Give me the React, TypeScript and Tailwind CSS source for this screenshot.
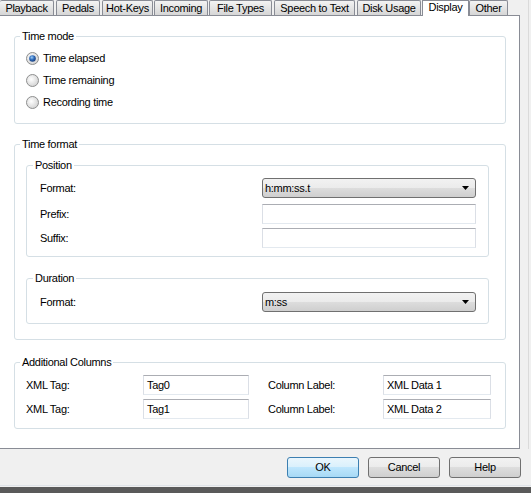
import React from "react";

function Radio({ checked }: { checked?: boolean }) {
  return (
    <svg width="13" height="13" viewBox="0 0 13 13" className="shrink-0">
      <defs>
        <radialGradient id="rg" cx="0.4" cy="0.4" r="0.75">
          <stop offset="0" stopColor="#ffffff" />
          <stop offset="1" stopColor="#cacaca" />
        </radialGradient>
        <radialGradient id="rd" cx="0.4" cy="0.35" r="0.75">
          <stop offset="0" stopColor="#9fd0f7" />
          <stop offset="0.45" stopColor="#2f6cbc" />
          <stop offset="1" stopColor="#15336a" />
        </radialGradient>
      </defs>
      <circle cx="6.5" cy="6.5" r="6" fill="url(#rg)" stroke="#8e8f8f" />
      {checked && <circle cx="6.5" cy="6.5" r="3.3" fill="url(#rd)" />}
    </svg>
  );
}

function Combo({ value }: { value: string }) {
  return (
    <div className="w-[214px] h-[20px] rounded-[3px] border border-[#707070] bg-[linear-gradient(#f2f2f2,#ebebeb_50%,#dddddd_50%,#cfcfcf)] flex items-center pl-[2px] pr-[3px]">
      <span className="flex-1 leading-[13px]">{value}</span>
      <svg width="7" height="4" viewBox="0 0 7 4" className="mr-[3px]">
        <path d="M0 0H7L3.5 4Z" fill="#000" />
      </svg>
    </div>
  );
}

function Field({ value, w }: { value?: string; w: string }) {
  return (
    <div
      className={`${w} h-[20px] border border-[#e3e9ef] border-t-[#abadb3] border-l-[#dbdfe6] border-r-[#dbdfe6] bg-white flex items-center pl-[3px] leading-[13px]`}
    >
      {value}
    </div>
  );
}

function Btn({ label, def }: { label: string; def?: boolean }) {
  return (
    <div
      className={
        def
          ? "w-[72px] h-[21px] rounded-[3px] border border-[#3c7fb1] bg-[linear-gradient(#eaf6fd,#d9f0fc_50%,#bee6fd_50%,#a7d9f5)] flex items-center justify-center leading-[13px]"
          : "w-[72px] h-[21px] rounded-[3px] border border-[#707070] bg-[linear-gradient(#f2f2f2,#ebebeb_50%,#dddddd_50%,#cfcfcf)] flex items-center justify-center leading-[13px]"
      }
    >
      {label}
    </div>
  );
}

const tabBase =
  "h-[15px] border border-b-0 border-[#898c95] rounded-t-[2px] bg-linear-to-b from-[#f3f3f3] to-[#d6d6d6] flex justify-center pt-[1px] leading-[13px] whitespace-nowrap";

export default function App() {
  return (
    <div className="w-[531px] h-[493px] bg-[#f0f0f0] text-[11px] tracking-[-0.3px] text-black font-['Liberation_Sans',Arial,sans-serif] flex flex-col overflow-hidden">
      <div className="flex">
        <div className="w-[520px] flex flex-col">
          {/* tabs */}
          <div className="flex items-end h-[15px]">
            <div className={`${tabBase} w-[54px] border-l-0`}>Playback</div>
            <div className={`${tabBase} w-[44px] ml-[2px]`}>Pedals</div>
            <div className={`${tabBase} w-[51px] ml-[2px]`}>Hot-Keys</div>
            <div className={`${tabBase} w-[54px] ml-[1px]`}>Incoming</div>
            <div className={`${tabBase} w-[63px] ml-[1px]`}>File Types</div>
            <div className={`${tabBase} w-[81px] ml-[2px]`}>Speech to Text</div>
            <div className={`${tabBase} w-[64px] ml-[2px]`}>Disk Usage</div>
            <div className="relative z-10 w-[47px] ml-[1px] h-[16px] mb-[-1px] border border-b-0 border-[#898c95] bg-white flex justify-center leading-[13px]">
              Display
            </div>
            <div className={`${tabBase} w-[39px]`}>Other</div>
          </div>
          {/* panel */}
          <div className="h-[434px] bg-white border border-l-0 border-[#898c95] pl-[14px] pr-[13px] flex flex-col">
            <fieldset className="mt-[14px] border border-[#d5dfe5] rounded-[3px] pb-[10px]">
              <legend className="ml-[5px] px-[2px] leading-[13px]">Time mode</legend>
              <div className="pt-[4px] pl-[11px] flex flex-col">
                <div className="h-[22px] flex items-center gap-[4px]">
                  <Radio checked />
                  <span>Time elapsed</span>
                </div>
                <div className="h-[22px] flex items-center gap-[4px]">
                  <Radio />
                  <span>Time remaining</span>
                </div>
                <div className="h-[22px] flex items-center gap-[4px]">
                  <Radio />
                  <span>Recording time</span>
                </div>
              </div>
            </fieldset>

            <fieldset className="mt-[14px] border border-[#d5dfe5] rounded-[3px] pb-[15px]">
              <legend className="ml-[5px] px-[2px] leading-[13px]">Time format</legend>
              <div className="pl-[11px] pr-[16px] flex flex-col">
                <fieldset className="mt-[8px] border border-[#d5dfe5] rounded-[3px] pb-[8px]">
                  <legend className="ml-[6px] px-[2px] leading-[13px]">Position</legend>
                  <div className="pt-[6px] pl-[13px] pr-[12px] flex flex-col">
                    <div className="flex items-center justify-between">
                      <span>Format:</span>
                      <Combo value="h:mm:ss.t" />
                    </div>
                    <div className="mt-[6px] flex items-center justify-between">
                      <span>Prefix:</span>
                      <Field w="w-[214px]" />
                    </div>
                    <div className="mt-[4px] flex items-center justify-between">
                      <span>Suffix:</span>
                      <Field w="w-[214px]" />
                    </div>
                  </div>
                </fieldset>
                <fieldset className="mt-[15px] border border-[#d5dfe5] rounded-[3px] pb-[11px]">
                  <legend className="ml-[6px] px-[2px] leading-[13px]">Duration</legend>
                  <div className="pt-[7px] pl-[13px] pr-[12px] flex items-center justify-between">
                    <span>Format:</span>
                    <Combo value="m:ss" />
                  </div>
                </fieldset>
              </div>
            </fieldset>

            <fieldset className="mt-[16px] border border-[#d5dfe5] rounded-[3px] pb-[9px]">
              <legend className="ml-[5px] px-[2px] leading-[13px]">Additional Columns</legend>
              <div className="pt-[6px] pl-[11px] grid grid-cols-[117px_106px_19px_115px_108px] gap-y-[4px] items-center">
                <span>XML Tag:</span>
                <Field w="w-[106px]" value="Tag0" />
                <span />
                <span>Column Label:</span>
                <Field w="w-[108px]" value="XML Data 1" />
                <span>XML Tag:</span>
                <Field w="w-[106px]" value="Tag1" />
                <span />
                <span>Column Label:</span>
                <Field w="w-[108px]" value="XML Data 2" />
              </div>
            </fieldset>
          </div>
        </div>
        <div className="w-[8px]" />
        <div className="w-[1px] bg-[#dadada]" />
      </div>
      {/* buttons */}
      <div className="h-[37px] pt-[8px] pr-[10px] flex justify-end gap-[9px] border-b border-[#dfe3e8]">
        <Btn label="OK" def />
        <Btn label="Cancel" />
        <Btn label="Help" />
      </div>
      <div className="h-[1px] bg-[#f0f0f0]" />
      <div className="flex-1 bg-[#5a5a5a]" />
    </div>
  );
}
